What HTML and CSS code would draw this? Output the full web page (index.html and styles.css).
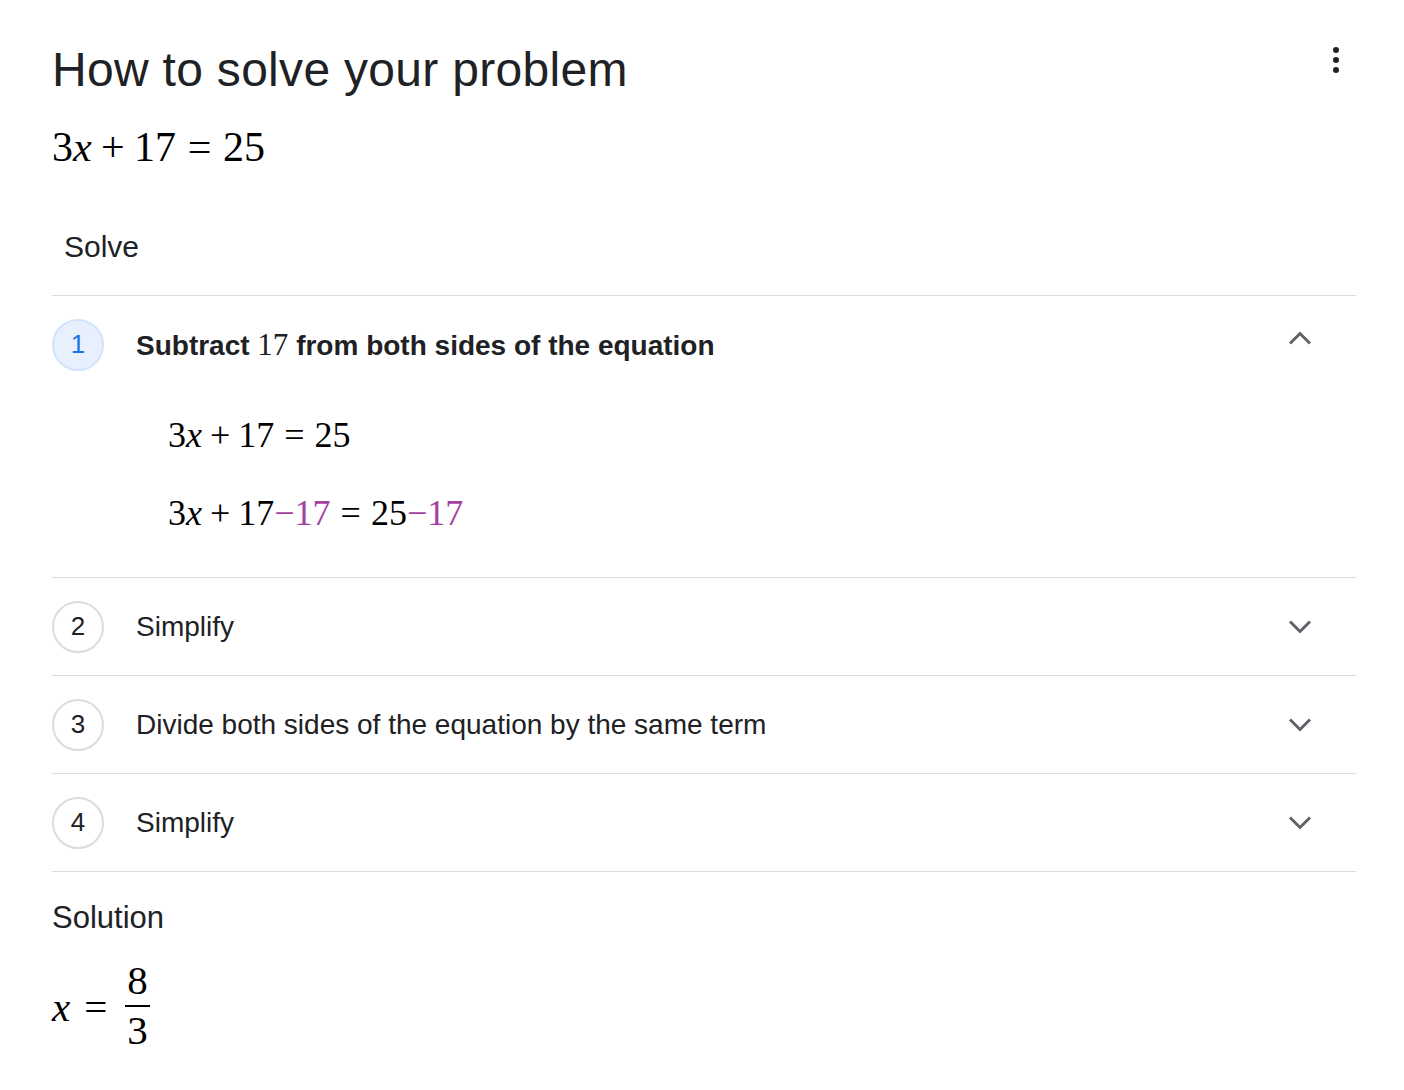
FILE: index.html
```html
<!DOCTYPE html>
<html>
<head>
<meta charset="utf-8">
<link rel="stylesheet" href="styles.css">
</head>
<body>
<div class="card">
  <div class="header">
    <h1 class="title">How to solve your problem</h1>
    <button class="more" aria-label="More">
      <svg width="24" height="36" viewBox="0 0 24 36"><circle cx="12" cy="8" r="3"/><circle cx="12" cy="18" r="3"/><circle cx="12" cy="28" r="3"/></svg>
    </button>
  </div>
  <div class="math problem">3<i>x</i><span class="op">+</span>17<span class="rel">=</span>25</div>
  <div class="section-label">Solve</div>
  <div class="steps">
    <div class="step open">
      <div class="step-head">
        <span class="num active">1</span>
        <span class="step-title bold">Subtract <span class="m">17</span> from both sides of the equation</span>
        <svg class="chev" width="24" height="14" viewBox="0 0 24 14"><path d="M2 12.5L12 2.5l10 10" fill="none" stroke="#5f6368" stroke-width="3"/></svg>
      </div>
      <div class="step-body">
        <div class="math eq">3<i>x</i><span class="op">+</span>17<span class="rel">=</span>25</div>
        <div class="math eq">3<i>x</i><span class="op">+</span>17<span class="hl">−17</span><span class="rel">=</span>25<span class="hl">−17</span></div>
      </div>
    </div>
    <div class="step">
      <div class="step-head">
        <span class="num">2</span>
        <span class="step-title">Simplify</span>
        <svg class="chev" width="24" height="14" viewBox="0 0 24 14"><path d="M2 1.5l10 10 10-10" fill="none" stroke="#5f6368" stroke-width="3"/></svg>
      </div>
    </div>
    <div class="step">
      <div class="step-head">
        <span class="num">3</span>
        <span class="step-title">Divide both sides of the equation by the same term</span>
        <svg class="chev" width="24" height="14" viewBox="0 0 24 14"><path d="M2 1.5l10 10 10-10" fill="none" stroke="#5f6368" stroke-width="3"/></svg>
      </div>
    </div>
    <div class="step">
      <div class="step-head">
        <span class="num">4</span>
        <span class="step-title">Simplify</span>
        <svg class="chev" width="24" height="14" viewBox="0 0 24 14"><path d="M2 1.5l10 10 10-10" fill="none" stroke="#5f6368" stroke-width="3"/></svg>
      </div>
    </div>
  </div>
  <div class="solution-label">Solution</div>
  <div class="math solution">
    <i>x</i><span class="eqs">=</span>
    <span class="frac"><span class="n">8</span><span class="d">3</span></span>
  </div>
</div>
</body>
</html>
```
FILE: styles.css
```css
* { box-sizing: border-box; }
body {
  margin: 0;
  background: #fff;
  font-family: Arial, "Liberation Sans", sans-serif;
  color: #202124;
}
.card {
  padding: 0 48px 0 52px;
}
.header {
  display: flex;
  justify-content: space-between;
  align-items: flex-start;
  padding-top: 40px;
}
.title {
  margin: 0;
  font-weight: 400;
  font-size: 48px;
  line-height: 60px;
  letter-spacing: 0.3px;
  color: #202124;
}
.more {
  border: 0;
  background: none;
  padding: 0;
  margin: 2px 8px 0 0;
  fill: #202124;
}
.math {
  font-family: "Liberation Serif", "Times New Roman", serif;
  color: #000;
}
.math i { font-style: italic; }
.op { margin: 0 0.222em; }
.rel { margin: 0 0.278em; }
.problem {
  font-size: 42px;
  line-height: 50px;
  margin-top: 22px;
}
.section-label {
  font-size: 30px;
  line-height: 36px;
  padding-left: 12px;
  margin-top: 57px;
  padding-bottom: 30px;
  border-bottom: 1px solid #dadce0;
}
.step {
  border-bottom: 1px solid #dadce0;
}
.step-head {
  height: 97px;
  display: flex;
  align-items: center;
}
.num {
  width: 52px;
  height: 52px;
  border-radius: 50%;
  border: 2px solid #dadce0;
  display: flex;
  align-items: center;
  justify-content: center;
  font-size: 26px;
  color: #202124;
  flex: none;
}
.num.active {
  background: #e8f0fe;
  border-color: #d2e3fc;
  color: #1a73e8;
}
.step-title {
  margin-left: 32px;
  font-size: 28px;
  flex: 1;
}
.step-title.bold { font-weight: 700; }
.step-title .m {
  font-family: "Liberation Serif", "Times New Roman", serif;
  font-weight: 400;
  font-size: 31px;
}
.chev {
  margin-right: 44px;
  flex: none;
}
.open .chev { margin-top: -14px; }
.step-body {
  padding: 22px 0 44px 116px;
}
.eq {
  font-size: 36px;
  line-height: 40px;
}
.eq + .eq { margin-top: 38px; }
.hl { color: #a4409f; }
.solution-label {
  font-size: 31px;
  line-height: 36px;
  margin-top: 28px;
}
.solution {
  display: flex;
  align-items: center;
  font-size: 41px;
  margin-top: 24px;
}
.eqs { margin: 0 18px 0 14px; }
.frac {
  display: inline-flex;
  flex-direction: column;
  align-items: center;
}
.frac .n {
  border-bottom: 2px solid #000;
  padding: 0 2px 5px;
  line-height: 40px;
}
.frac .d { line-height: 46px; }
```
